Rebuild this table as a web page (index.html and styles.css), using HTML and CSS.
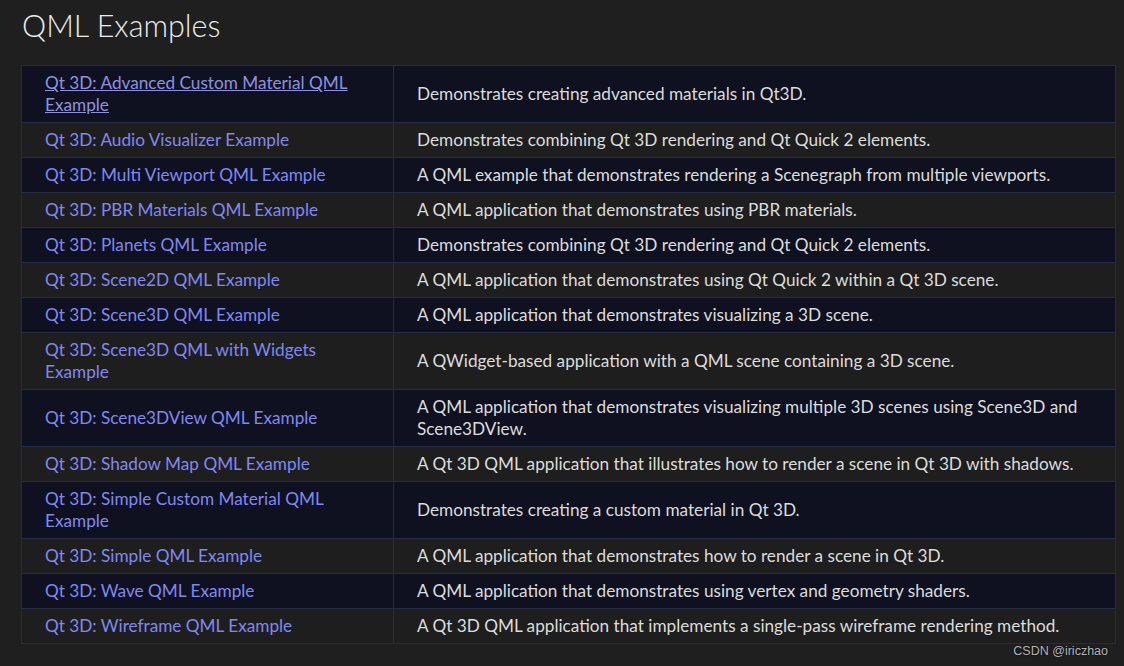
FILE: index.html
```html
<!DOCTYPE html>
<html lang="en">
<head>
<meta charset="utf-8">
<title>QML Examples</title>
<link rel="stylesheet" href="styles.css">
</head>
<body>
<main class="page">
  <h1 class="title">QML Examples</h1>
  <table class="examples">
    <tbody>
      <tr class="odd"><td class="name"><a class="visited" href="#">Qt 3D: Advanced Custom Material QML Example</a></td><td class="desc">Demonstrates creating advanced materials in Qt3D.</td></tr>
      <tr class="even"><td class="name"><a href="#">Qt 3D: Audio Visualizer Example</a></td><td class="desc">Demonstrates combining Qt 3D rendering and Qt Quick 2 elements.</td></tr>
      <tr class="odd"><td class="name"><a href="#">Qt 3D: Multi Viewport QML Example</a></td><td class="desc">A QML example that demonstrates rendering a Scenegraph from multiple viewports.</td></tr>
      <tr class="even"><td class="name"><a href="#">Qt 3D: PBR Materials QML Example</a></td><td class="desc">A QML application that demonstrates using PBR materials.</td></tr>
      <tr class="odd"><td class="name"><a href="#">Qt 3D: Planets QML Example</a></td><td class="desc">Demonstrates combining Qt 3D rendering and Qt Quick 2 elements.</td></tr>
      <tr class="even"><td class="name"><a href="#">Qt 3D: Scene2D QML Example</a></td><td class="desc">A QML application that demonstrates using Qt Quick 2 within a Qt 3D scene.</td></tr>
      <tr class="odd"><td class="name"><a href="#">Qt 3D: Scene3D QML Example</a></td><td class="desc">A QML application that demonstrates visualizing a 3D scene.</td></tr>
      <tr class="even"><td class="name"><a href="#">Qt 3D: Scene3D QML with Widgets Example</a></td><td class="desc">A QWidget-based application with a QML scene containing a 3D scene.</td></tr>
      <tr class="odd"><td class="name"><a href="#">Qt 3D: Scene3DView QML Example</a></td><td class="desc">A QML application that demonstrates visualizing multiple 3D scenes using Scene3D and Scene3DView.</td></tr>
      <tr class="even"><td class="name"><a href="#">Qt 3D: Shadow Map QML Example</a></td><td class="desc">A Qt 3D QML application that illustrates how to render a scene in Qt 3D with shadows.</td></tr>
      <tr class="odd"><td class="name"><a href="#">Qt 3D: Simple Custom Material QML Example</a></td><td class="desc">Demonstrates creating a custom material in Qt 3D.</td></tr>
      <tr class="even"><td class="name"><a href="#">Qt 3D: Simple QML Example</a></td><td class="desc">A QML application that demonstrates how to render a scene in Qt 3D.</td></tr>
      <tr class="odd"><td class="name"><a href="#">Qt 3D: Wave QML Example</a></td><td class="desc">A QML application that demonstrates using vertex and geometry shaders.</td></tr>
      <tr class="even"><td class="name"><a href="#">Qt 3D: Wireframe QML Example</a></td><td class="desc">A Qt 3D QML application that implements a single-pass wireframe rendering method.</td></tr>
    </tbody>
  </table>
  <div class="watermark">CSDN @iriczhao</div>
</main>
</body>
</html>
```

FILE: styles.css
```css
html, body {
  margin: 0;
  padding: 0;
  background: #1f1f1f;
}
body {
  font-family: Lato, "Noto Sans", sans-serif;
  color: #dcdcdc;
  width: 1124px;
  height: 666px;
  overflow: hidden;
}
.page {
  padding: 0 8px 0 21px;
  display: flex;
  flex-direction: column;
}
.title {
  margin: 5px 0 0 1px;
  height: 60px;
  font-size: 30.5px;
  line-height: 40px;
  font-weight: 300;
  color: #ececec;
}
.examples {
  width: 1095px;
  border-collapse: collapse;
  border: 1px solid #262b45;
  font-size: 17.2px;
  line-height: 22px;
}
.examples td {
  border: 1px solid #262b45;
  padding: 6px 23px 6px 23px;
  vertical-align: middle;
}
.examples td.name {
  width: 325px;
}
.examples td.desc {
  padding-left: 23px;
}
.odd { background: #0f1120; }
.even { background: #1e1e1e; }
.examples a {
  color: #8088f2;
  text-decoration: none;
}
.examples a.visited {
  color: #8e91e0;
  text-decoration: underline;
}
.watermark {
  align-self: flex-end;
  margin: 0 8px 0 0;
  font-family: "Liberation Sans", Arial, sans-serif;
  font-size: 12.5px;
  line-height: 14px;
  color: #b4b4b4;
  text-shadow: 0 0 2px #000;
}
```
